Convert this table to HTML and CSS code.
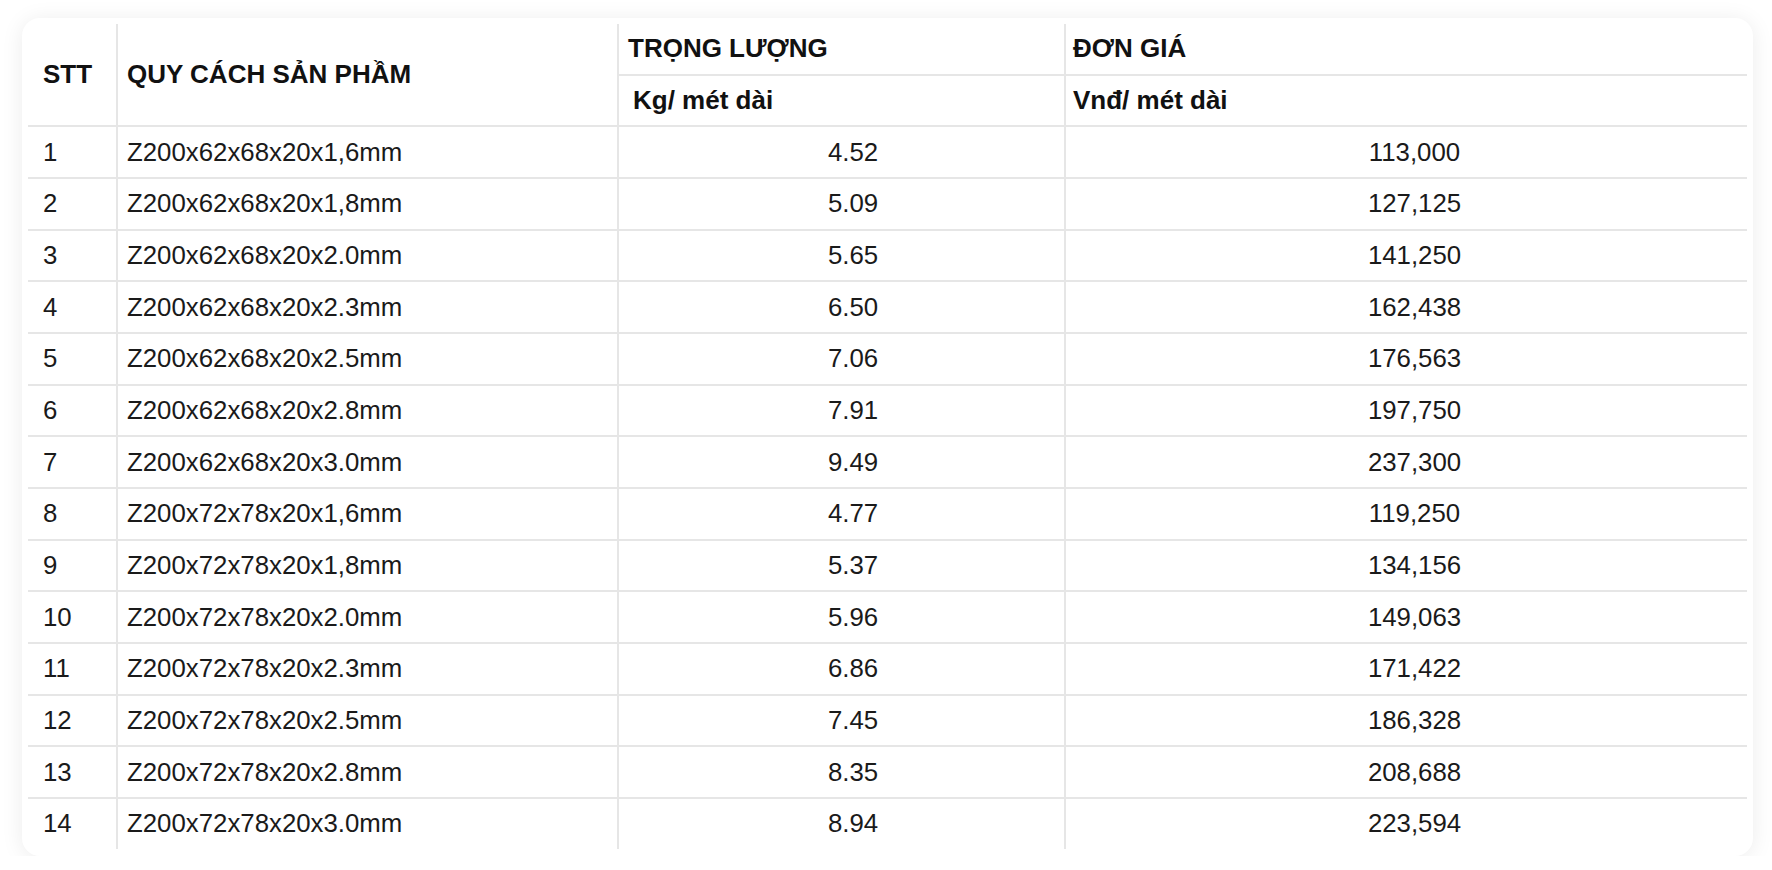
FILE: index.html
```html
<!DOCTYPE html>
<html lang="vi">
<head>
<meta charset="utf-8">
<title>Bảng giá xà gồ Z200</title>
<link rel="stylesheet" href="styles.css">
</head>
<body>
<div class="card">
  <table class="price-table">
    <colgroup>
      <col class="c-stt">
      <col class="c-spec">
      <col class="c-weight">
      <col class="c-price">
    </colgroup>
    <thead>
      <tr class="h1">
        <th rowspan="2" class="stt">STT</th>
        <th rowspan="2" class="spec">QUY CÁCH SẢN PHẦM</th>
        <th class="grp grp-w">TRỌNG LƯỢNG</th>
        <th class="grp grp-p">ĐƠN GIÁ</th>
      </tr>
      <tr class="h2">
        <th class="unit unit-w">Kg/ mét dài</th>
        <th class="unit unit-p">Vnđ/ mét dài</th>
      </tr>
    </thead>
    <tbody>
      <tr><td class="stt">1</td><td class="spec">Z200x62x68x20x1,6mm</td><td class="num-w">4.52</td><td class="num-p">113,000</td></tr>
      <tr><td class="stt">2</td><td class="spec">Z200x62x68x20x1,8mm</td><td class="num-w">5.09</td><td class="num-p">127,125</td></tr>
      <tr><td class="stt">3</td><td class="spec">Z200x62x68x20x2.0mm</td><td class="num-w">5.65</td><td class="num-p">141,250</td></tr>
      <tr><td class="stt">4</td><td class="spec">Z200x62x68x20x2.3mm</td><td class="num-w">6.50</td><td class="num-p">162,438</td></tr>
      <tr><td class="stt">5</td><td class="spec">Z200x62x68x20x2.5mm</td><td class="num-w">7.06</td><td class="num-p">176,563</td></tr>
      <tr><td class="stt">6</td><td class="spec">Z200x62x68x20x2.8mm</td><td class="num-w">7.91</td><td class="num-p">197,750</td></tr>
      <tr><td class="stt">7</td><td class="spec">Z200x62x68x20x3.0mm</td><td class="num-w">9.49</td><td class="num-p">237,300</td></tr>
      <tr><td class="stt">8</td><td class="spec">Z200x72x78x20x1,6mm</td><td class="num-w">4.77</td><td class="num-p">119,250</td></tr>
      <tr><td class="stt">9</td><td class="spec">Z200x72x78x20x1,8mm</td><td class="num-w">5.37</td><td class="num-p">134,156</td></tr>
      <tr><td class="stt">10</td><td class="spec">Z200x72x78x20x2.0mm</td><td class="num-w">5.96</td><td class="num-p">149,063</td></tr>
      <tr><td class="stt">11</td><td class="spec">Z200x72x78x20x2.3mm</td><td class="num-w">6.86</td><td class="num-p">171,422</td></tr>
      <tr><td class="stt">12</td><td class="spec">Z200x72x78x20x2.5mm</td><td class="num-w">7.45</td><td class="num-p">186,328</td></tr>
      <tr><td class="stt">13</td><td class="spec">Z200x72x78x20x2.8mm</td><td class="num-w">8.35</td><td class="num-p">208,688</td></tr>
      <tr><td class="stt">14</td><td class="spec">Z200x72x78x20x3.0mm</td><td class="num-w">8.94</td><td class="num-p">223,594</td></tr>
    </tbody>
  </table>
</div>
</body>
</html>
```

FILE: styles.css
```css
html, body {
  margin: 0;
  padding: 0;
  background: #ffffff;
}

body {
  font-family: "Liberation Sans", Arial, Helvetica, sans-serif;
  color: #1a1a1a;
}

.card {
  margin: 18px 19px 0 22px;
  padding: 6px 6px 7px 6px;
  background: #ffffff;
  border-radius: 18px;
  box-shadow: 0 2px 22px rgba(0, 0, 0, 0.08);
}

.price-table {
  width: 1719px;
  table-layout: fixed;
  border-collapse: separate;
  border-spacing: 0;
}

.c-stt { width: 88px; }
.c-spec { width: 501px; }
.c-weight { width: 447px; }
.c-price { width: 683px; }

.price-table th,
.price-table td {
  padding: 0;
  font-size: 25.8px;
  line-height: 29px;
  text-align: left;
  vertical-align: middle;
  border-bottom: 2px solid #e6e6e6;
  border-left: 2px solid #e6e6e6;
  white-space: nowrap;
}

.price-table th {
  font-size: 26px;
  font-weight: 700;
  color: #111111;
}

.price-table .stt {
  border-left: none;
  padding-left: 15px;
}

.price-table .spec {
  padding-left: 9px;
}

.h1 { height: 51.66px; }
.h2 { height: 51.66px; }
.price-table tbody tr { height: 51.66px; }
.price-table tbody tr:last-child { height: 49.66px; }

.price-table .grp-w { padding-left: 9px; }
.price-table .grp-p { padding-left: 7px; }
.price-table .unit-w { padding-left: 14px; }
.price-table .unit-p { padding-left: 7px; }

.price-table .num-w {
  text-align: center;
  padding-left: 23px;
}

.price-table .num-p {
  text-align: center;
  padding-left: 16px;
}

.price-table tbody tr:last-child td {
  border-bottom: none;
}
```
